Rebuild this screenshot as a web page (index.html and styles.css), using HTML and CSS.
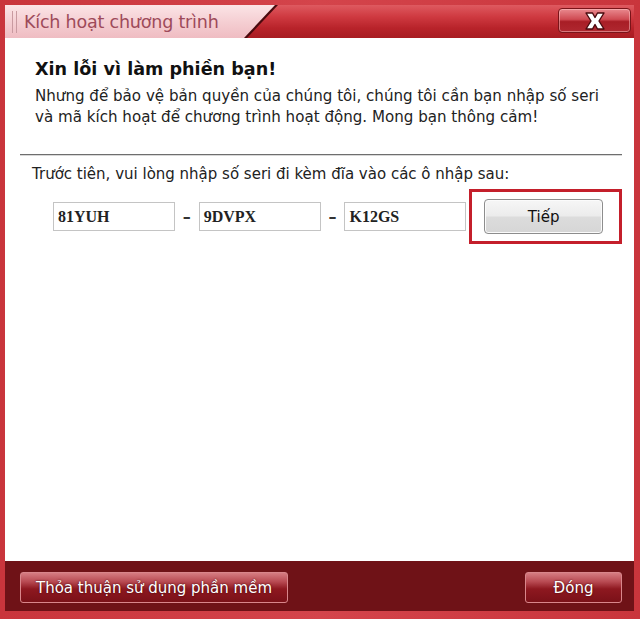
FILE: index.html
```html
<!DOCTYPE html>
<html lang="vi">
<head>
<meta charset="utf-8">
<title>Kích hoạt chương trình</title>
<link rel="stylesheet" href="styles.css">
</head>
<body>
<div class="window">
  <div class="titlebar">
    <div class="tab-wrap">
      <div class="tab">
        <span class="grip"></span>
        <span class="title">Kích hoạt chương trình</span>
      </div>
    </div>
    <button class="close" aria-label="Đóng">
      <svg width="28" height="20" viewBox="0 0 28 20">
        <path d="M5 2 L11.5 2 L14 6.5 L16.5 2 L23 2 L18 10 L23 18 L16.5 18 L14 13.5 L11.5 18 L5 18 L10 10 Z" fill="#fff" stroke="#4a0a0e" stroke-width="1.4" stroke-linejoin="round"/>
      </svg>
    </button>
  </div>
  <div class="content">
    <h1 class="heading">Xin lỗi vì làm phiền bạn!</h1>
    <p class="intro">Nhưng để bảo vệ bản quyền của chúng tôi, chúng tôi cần bạn nhập số seri<br>và mã kích hoạt để chương trình hoạt động. Mong bạn thông cảm!</p>
    <div class="rule"></div>
    <p class="instruction">Trước tiên, vui lòng nhập số seri đi kèm đĩa vào các ô nhập sau:</p>
    <div class="serial-row">
      <div class="field">81YUH</div>
      <span class="dash">–</span>
      <div class="field">9DVPX</div>
      <span class="dash">–</span>
      <div class="field">K12GS</div>
      <div class="highlight">
        <button class="next">Tiếp</button>
      </div>
    </div>
  </div>
  <div class="footer">
    <button class="red-btn license">Thỏa thuận sử dụng phần mềm</button>
    <button class="red-btn close-btn">Đóng</button>
  </div>
</div>
</body>
</html>
```

FILE: styles.css
```css
* { box-sizing: border-box; }
html, body { margin: 0; padding: 0; }
body {
  width: 640px;
  height: 619px;
  overflow: hidden;
  font-family: "DejaVu Sans", "Liberation Sans", sans-serif;
}
.window {
  width: 640px;
  height: 619px;
  background: linear-gradient(to right, #c9353c, #d4444b 50%, #c9353c);
  padding: 5px 6px 8px 5px;
  display: flex;
  flex-direction: column;
}
.titlebar {
  height: 33px;
  display: flex;
  align-items: flex-start;
  background: linear-gradient(to bottom, #de5a60 0%, #cf3a41 35%, #b8232a 70%, #a81c22 100%);
}
.tab-wrap {
  width: 273px;
  height: 33px;
  background: #4a0a0e;
  clip-path: polygon(0 0, 100% 0, 242px 100%, 0 100%);
}
.tab {
  width: 270px;
  height: 33px;
  background: linear-gradient(to bottom, #fbe4e6 0%, #f5cfd3 50%, #efbcc2 100%);
  clip-path: polygon(0 0, 100% 0, 239px 100%, 0 100%);
  display: flex;
  align-items: center;
  padding-left: 7px;
}
.grip {
  width: 5px;
  height: 22px;
  border-left: 1px solid #c99aa0;
  border-right: 1px solid #c99aa0;
  margin-right: 7px;
}
.title {
  font-family: "DejaVu Sans", sans-serif;
  font-size: 17.5px;
  color: #9e4a5a;
  letter-spacing: -0.2px;
}
.close {
  margin: 3px 3px 0 auto;
  width: 73px;
  height: 25px;
  border: 1px solid #7a1419;
  border-radius: 4px;
  background: linear-gradient(to bottom, #e98a8f 0%, #cf4a52 45%, #a81e26 55%, #b02830 100%);
  box-shadow: inset 0 0 0 1px rgba(255,200,200,0.5);
  display: flex;
  align-items: center;
  justify-content: center;
  padding: 0;
}
.content {
  flex: 1;
  background: #fff;
  padding: 20px 12px 0 15px;
  display: flex;
  flex-direction: column;
}
.heading {
  margin: 0 0 0 15px;
  font-size: 17.6px;
  line-height: 22px;
  font-weight: bold;
  color: #111;
}
.intro {
  margin: 6px 0 0 15px;
  font-size: 15.1px;
  line-height: 21px;
  color: #222;
  white-space: nowrap;
}
.rule {
  height: 2px;
  border-top: 1px solid #6e6e6e;
  border-bottom: 1px solid #d8d8d8;
  margin-top: 26px;
}
.instruction {
  margin: 8px 0 0 12px;
  font-size: 15px;
  line-height: 20px;
  color: #222;
}
.serial-row {
  display: flex;
  align-items: center;
  margin-top: 5px;
  padding-left: 33px;
}
.field {
  width: 122px;
  height: 29px;
  border: 1px solid #c4c4c4;
  font-family: "Liberation Serif", serif;
  font-weight: bold;
  font-size: 16px;
  line-height: 27px;
  padding-left: 4px;
  color: #222;
}
.dash {
  width: 24px;
  text-align: center;
  font-size: 16px;
  font-weight: bold;
  color: #333;
}
.highlight {
  margin-left: 3px;
  width: 153px;
  height: 55px;
  border: 3px solid #c41f2b;
  display: flex;
  align-items: center;
  justify-content: center;
  padding-right: 4px;
}
.next {
  width: 119px;
  height: 35px;
  border: 1px solid #8d8d8d;
  border-radius: 4px;
  background: linear-gradient(to bottom, #f6f6f6 0%, #ececec 48%, #dcdcdc 52%, #d6d6d6 100%);
  box-shadow: inset 0 0 0 1px #fbfbfb;
  font-family: "DejaVu Sans", sans-serif;
  font-size: 15px;
  color: #111;
}
.footer {
  height: 50px;
  background: #6f1217;
  display: flex;
  align-items: flex-start;
  padding: 11px 12px 0 15px;
}
.red-btn {
  height: 31px;
  border: 1px solid #d9868b;
  border-radius: 3px;
  background: linear-gradient(to bottom, #d67c82 0%, #b84a52 30%, #8e1820 55%, #7a1118 100%);
  color: #fff;
  font-family: "DejaVu Sans", sans-serif;
  font-size: 15px;
  text-shadow: 0 0 2px #3a0508;
  padding: 0;
}
.license { width: 268px; }
.close-btn { width: 97px; margin-left: auto; }
```
